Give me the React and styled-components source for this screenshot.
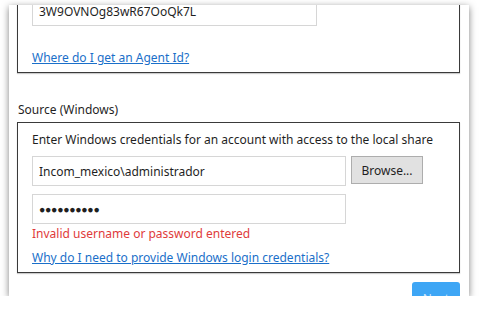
import React from 'react'
import styled, { createGlobalStyle } from 'styled-components'

const GlobalStyle = createGlobalStyle`
  html, body {
    margin: 0;
    background: #ffffff;
  }
  body {
    font-family: "Noto Sans", "Open Sans", sans-serif;
    font-size: 12px;
    color: #1f1f1f;
  }
`

const Page = styled.div`
  padding: 5px 10px 0 9px;
`

const Window = styled.div`
  width: 460px;
  height: 291px;
  box-sizing: border-box;
  padding: 0 9px 0 8px;
  background: #ffffff;
  overflow: hidden;
  box-shadow: 0 2px 7px rgba(0, 0, 0, 0.5);
`

// the panel is scrolled, so the first group starts above the visible area
const Scrolled = styled.div`
  margin-top: -20px;
  display: flex;
  flex-direction: column;
`

const GroupBox = styled.div`
  border: 1px solid #3a3a3a;
  box-shadow: 0 1px 1px rgba(0, 0, 0, 0.2);
  padding: ${(p) => p.$pad || '10px 14px 6px 14px'};
  display: flex;
  flex-direction: column;
  align-items: flex-start;
`

const SectionLabel = styled.div`
  margin: 29px 0 4px 1px;
  line-height: 16px;
`

const Hint = styled.div`
  line-height: 16px;
`

const TextBox = styled.div`
  box-sizing: border-box;
  width: ${(p) => p.$width}px;
  height: 30px;
  margin-top: ${(p) => p.$top || 0}px;
  border: 1px solid #d6d6d6;
  background: #fff;
  padding: 0 6px;
  display: flex;
  align-items: center;
  font-size: ${(p) => (p.$secret ? '10.5px' : '12px')};
  color: #1f1f1f;
  letter-spacing: ${(p) => (p.$secret ? '-0.3px' : '0')};
`

const Row = styled.div`
  display: flex;
  gap: 5px;
  margin-top: 8px;
`

const Button = styled.div`
  box-sizing: border-box;
  width: 72px;
  height: 28px;
  background: #e1e1e1;
  border: 1px solid #adadad;
  display: flex;
  align-items: center;
  justify-content: center;
  color: #1f1f1f;
`

const Link = styled.a`
  display: block;
  line-height: 16px;
  margin-top: ${(p) => p.$top}px;
  color: #1a6fc9;
  text-decoration: underline;
  cursor: pointer;
`

const Error = styled.div`
  margin-top: 2px;
  line-height: 16px;
  color: #e03b3b;
`

const Footer = styled.div`
  display: flex;
  justify-content: flex-end;
  margin-top: 9px;
`

const PrimaryButton = styled.div`
  width: 48px;
  height: 32px;
  border-radius: 3px;
  background: #3ea6f5;
  color: #cfe6fb;
  display: flex;
  align-items: center;
  justify-content: center;
`

export default function App() {
  return (
    <>
      <GlobalStyle />
      <Page>
        <Window>
          <Scrolled>
            <GroupBox>
              <TextBox $width={285}>3W9OVNOg83wR67OoQk7L</TextBox>
              <Link $top={24}>Where do I get an Agent Id?</Link>
            </GroupBox>

            <SectionLabel>Source (Windows)</SectionLabel>
            <GroupBox $pad="9px 14px 6px 14px">
              <Hint>Enter Windows credentials for an account with access to the local share</Hint>
              <Row>
                <TextBox $width={314}>Incom_mexico\administrador</TextBox>
                <Button>Browse...</Button>
              </Row>
              <TextBox $width={314} $top={8} $secret>
                ●●●●●●●●●●
              </TextBox>
              <Error>Invalid username or password entered</Error>
              <Link $top={8}>Why do I need to provide Windows login credentials?</Link>
            </GroupBox>

            <Footer>
              <PrimaryButton>Next</PrimaryButton>
            </Footer>
          </Scrolled>
        </Window>
      </Page>
    </>
  )
}
